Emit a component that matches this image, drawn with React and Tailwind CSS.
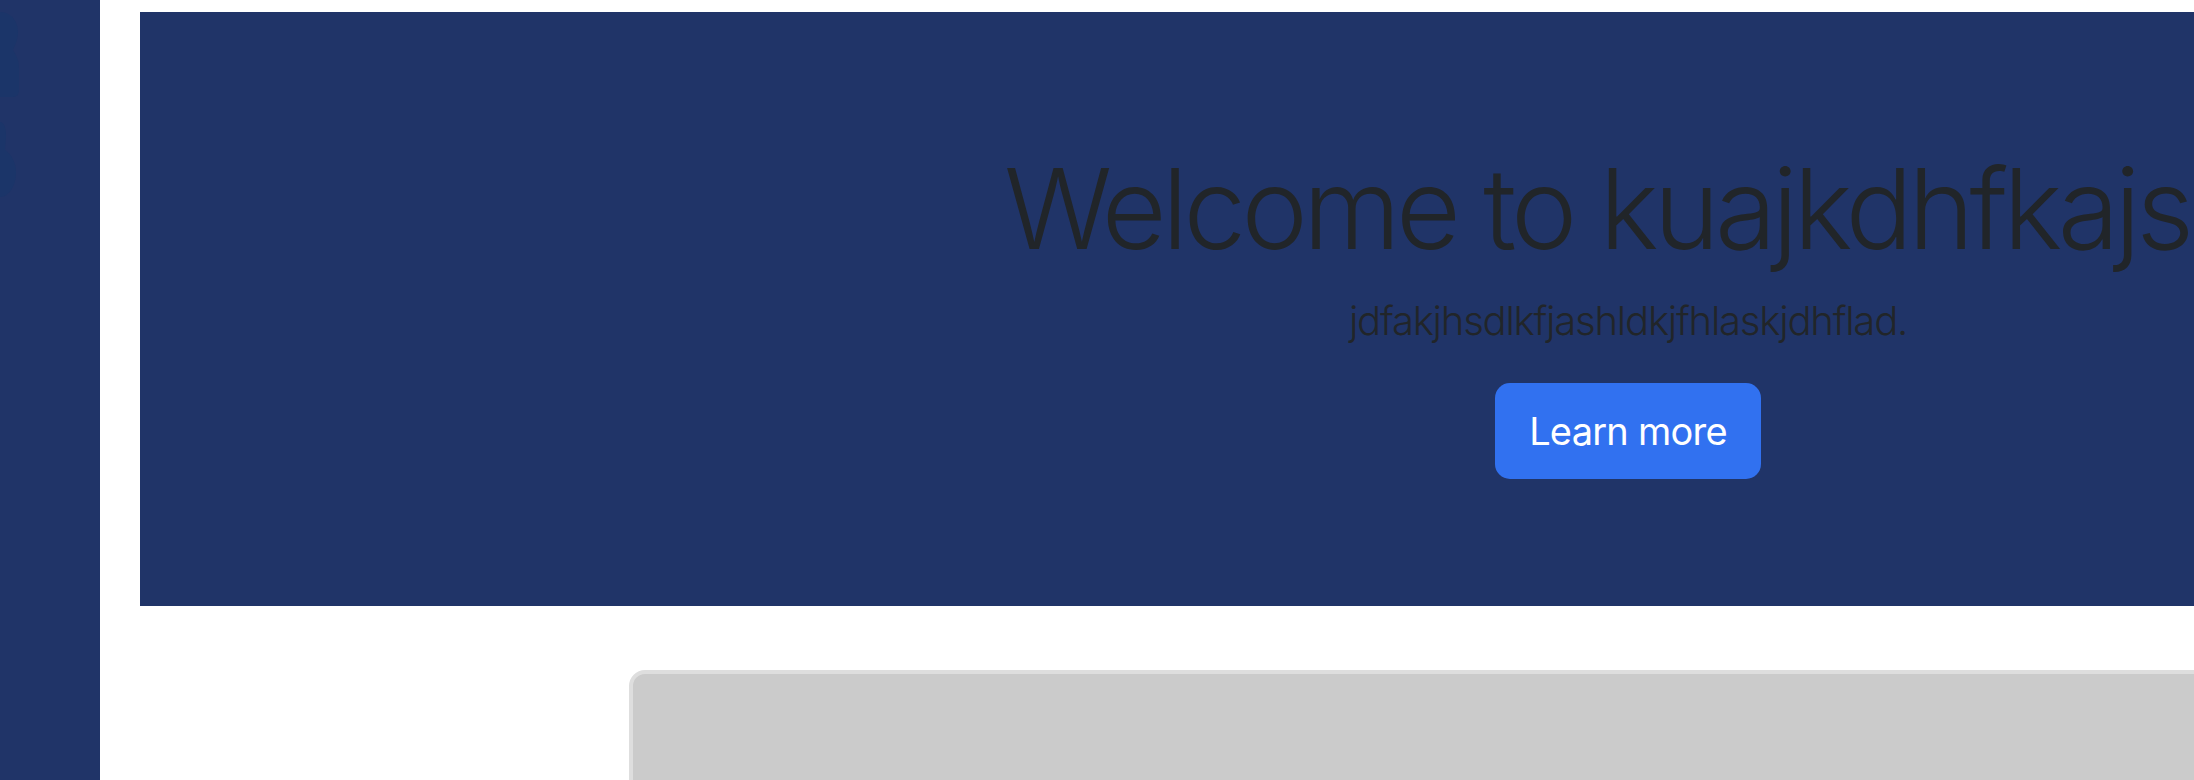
export default function App() {
    return (
        <div className="w-[2194px] h-[780px] overflow-hidden flex bg-white font-['Inter',sans-serif]">
            {/* Sidebar */}
            <aside className="relative w-[100px] shrink-0 bg-[#203468] overflow-hidden">
                <svg className="absolute left-0 top-0" width="30" height="210" viewBox="0 0 30 210">
                    <path
                        d="M0 12 C10 12 18 20 18 32 C18 40 15 45 13 50 C16 55 19 60 19 68 L19 90 C19 94 17 97 13 97 L0 97 Z"
                        fill="#1b3569"
                    />
                    <path
                        d="M0 122 C4 122 6 128 6 136 C6 142 5 146 5 150 C11 154 16 162 16 172 C16 186 9 197 0 197 Z"
                        fill="#1b3569"
                    />
                </svg>
            </aside>

            {/* Main */}
            <main className="w-[2976px] shrink-0 ml-[40px] pt-[12px] flex flex-col">
                {/* Hero */}
                <section className="shrink-0 h-[594px] bg-[#203468] flex flex-col items-center pt-[129px] text-center text-[#212529]">
                    <h1 className="text-[112px] leading-[1.2] font-light tracking-[-0.042em] whitespace-nowrap mb-[16px]">
                        Welcome to kuajkdhfkajsd
                    </h1>
                    <p className="text-[40px] leading-[1.5] font-light tracking-[-0.03em] mb-[32px]">
                        jdfakjhsdlkfjashldkjfhlaskjdhflad.
                    </p>
                    <button className="w-[266px] h-[96px] flex items-center justify-center rounded-[15px] bg-[#3171f0] text-white text-[38px] leading-[1.5] tracking-[-0.02em]">
                        Learn more
                    </button>
                </section>

                {/* Content card */}
                <div className="shrink-0 mt-[64px] mx-auto w-[1998px] h-[300px] rounded-[16px] border-4 border-[#dedede] bg-[#cbcbcb]" />
            </main>
        </div>
    );
}
